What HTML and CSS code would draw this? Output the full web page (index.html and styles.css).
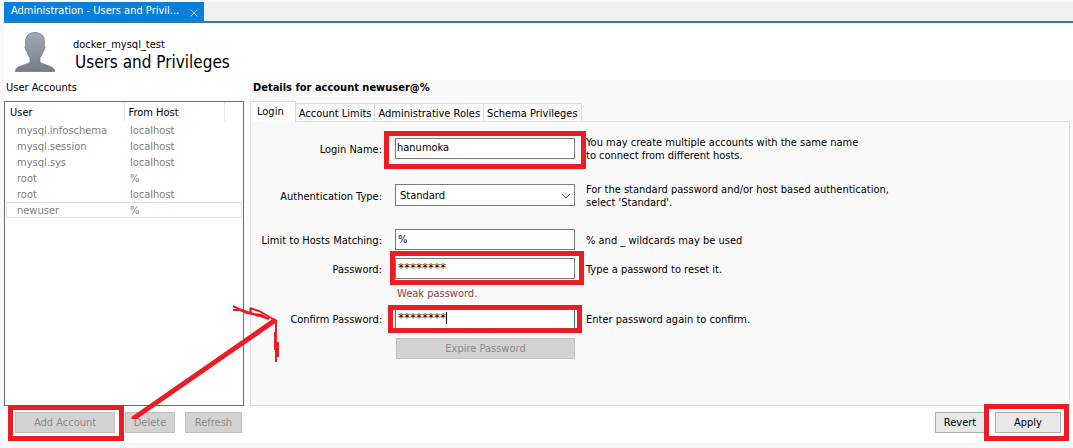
FILE: index.html
```html
<!DOCTYPE html>
<html lang="en">
<head>
<meta charset="utf-8">
<title>Users and Privileges</title>
<link rel="stylesheet" href="styles.css">
</head>
<body>
<div class="app">
  <nav class="doc-tabs">
    <div class="doc-tab">
      <span>Administration - Users and Privil...</span>
      <button class="close" aria-label="Close tab"><svg viewBox="0 0 8 8" width="8" height="8"><path d="M.5 .5 7.500 7.500M7.500 .5 .5 7.500"/></svg></button>
    </div>
  </nav>
  <header class="header">
    <svg class="avatar" viewBox="0 0 40 40" width="40" height="40" aria-hidden="true">
      <defs><linearGradient id="shade" x1="0" y1="0" x2="0" y2="1"><stop offset="0" stop-color="#a3a9b3"/><stop offset="1" stop-color="#747c89"/></linearGradient></defs>
      <path d="M20 .5C14 .5 10.500 4 10.500 10c0 1.500.1 2.500.2 3.500-.8.300-.7 2 0 4.200.4 1.300.8 1.800 1.400 2 .5 2.600 1.400 4.500 2.900 6v4.300c-1 2-11.500 4-13.500 6.300C.5 37.500.5 38.500.5 39.500h39c0-1 0-2-1-3.200-2-2.300-12.500-4.300-13.500-6.300v-4.300c1.500-1.500 2.400-3.400 2.900-6 .6-.2 1-.7 1.400-2 .7-2.200.8-3.900 0-4.200.1-1 .2-2 .2-3.500C29.500 4 26 .5 20 .5z" fill="url(#shade)" stroke="#737a85" stroke-width=".8"/>
    </svg>
    <div>
      <div class="connection">docker_mysql_test</div>
      <h1>Users and Privileges</h1>
    </div>
  </header>
  <main class="main">
    <section class="accounts">
      <h2 class="caption">User Accounts</h2>
      <div class="list">
        <table>
          <colgroup><col class="col-user"><col class="col-host"><col></colgroup>
          <thead><tr><th>User</th><th>From Host</th><th></th></tr></thead>
          <tbody>
            <tr><td>mysql.infoschema</td><td>localhost</td><td></td></tr>
            <tr><td>mysql.session</td><td>localhost</td><td></td></tr>
            <tr><td>mysql.sys</td><td>localhost</td><td></td></tr>
            <tr><td>root</td><td>%</td><td></td></tr>
            <tr><td>root</td><td>localhost</td><td></td></tr>
            <tr class="current"><td>newuser</td><td>%</td><td></td></tr>
          </tbody>
        </table>
      </div>
    </section>
    <section class="details">
      <h2 class="caption strong">Details for account newuser@%</h2>
      <div class="tabs" role="tablist">
        <button class="tab active" role="tab" aria-selected="true">Login</button>
        <button class="tab" role="tab">Account Limits</button>
        <button class="tab" role="tab">Administrative Roles</button>
        <button class="tab" role="tab">Schema Privileges</button>
      </div>
      <form class="panel">
        <label class="tall" for="login">Login Name:</label>
        <div class="field tall"><input id="login" type="text" value="hanumoka"><span class="mark mark-login"></span></div>
        <p class="tall">You may create multiple accounts with the same name<br>to connect from different hosts.</p>

        <label class="tall" for="auth">Authentication Type:</label>
        <div class="field tall"><select id="auth"><option>Standard</option></select><svg class="chevron" viewBox="0 0 10 6" width="10" height="6"><path d="M1 1l4 4 4-4"/></svg></div>
        <p class="tall">For the standard password and/or host based authentication,<br>select 'Standard'.</p>

        <label for="hosts">Limit to Hosts Matching:</label>
        <div class="field"><input id="hosts" type="text" value="%"></div>
        <p>% and _ wildcards may be used</p>

        <label for="password">Password:</label>
        <div class="field"><input id="password" class="secret" type="text" value="********"><span class="mark mark-password"></span></div>
        <p>Type a password to reset it.</p>

        <output class="warning" for="password">Weak password.</output>

        <label for="confirm">Confirm Password:</label>
        <div class="field"><input id="confirm" class="secret focused" type="text" value="********"><span class="caret"></span><span class="mark mark-confirm"></span></div>
        <p>Enter password again to confirm.</p>

        <button class="button expire" type="button" disabled>Expire Password</button>
      </form>
    </section>
  </main>
  <footer class="actions">
    <div class="marked"><button class="button add" disabled>Add Account</button><span class="mark mark-add"></span></div>
    <button class="button delete" disabled>Delete</button>
    <button class="button refresh" disabled>Refresh</button>
    <span class="spacer"></span>
    <button class="button">Revert</button>
    <div class="marked"><button class="button apply">Apply</button><span class="mark mark-apply"></span></div>
  </footer>
  <svg class="arrow" viewBox="0 0 160 120" width="160" height="120" aria-hidden="true">
    <path class="shaft" d="M7 119 147 22"/>
    <path class="barbs" d="M106 7l6 3 6 2 8 3 8 1 8 4M106 11h7l7 3 10 2 12 4M123 9l9 3 9 5 6 4M123 9l1 5 7 3"/>
    <path class="barbs" d="M149 21v42M148 33v18M151 43v15M148 52h3"/>
  </svg>
</div>
</body>
</html>
```
FILE: styles.css
```css
* { box-sizing: border-box; }
body {
  margin: 0;
  padding: 2px 0 5px 4px;
  background: #f8f8fb;
  color: #000;
  font: 11px/13px "DejaVu Sans Condensed", Tahoma, sans-serif;
}
button, input, select { font: inherit; color: inherit; margin: 0; border-radius: 0; }
h1, h2, p { margin: 0; font-weight: 400; }
.app { position: relative; background: #fff; }
.doc-tabs { display: flex; background: #f0f0f0; border-bottom: 2px solid #2f78b3; }
.doc-tab {
  display: flex; align-items: center; justify-content: space-between;
  width: 200px; height: 19px; padding: 0 6px 2px 7px;
  background: #0a7fd9; color: #fff; white-space: nowrap;
}
.close { display: flex; padding: 4px 0 0; border: 0; background: none; }
.close svg { fill: none; stroke: #9bd0f5; }
.header { display: flex; gap: 18px; height: 57px; padding: 9px 11px; }
.connection { padding-top: 6px; }
h1 { padding-left: 2px; font-size: 17px; line-height: 22px; }
.main { display: flex; min-height: 326px; gap: 6px; }
.accounts { display: flex; flex-direction: column; flex: 0 0 240px; }
.caption { padding-left: 2px; font-size: 11px; line-height: 15px; height: 21px; }
.strong { padding-left: 3px; font-weight: 700; }
.list { flex: 1; border: 1px solid #6d6d6d; padding: 0 1px; }
table { width: 100%; border-collapse: collapse; table-layout: fixed; }
.col-user { width: 118px; }
.col-host { width: 100px; }
th { height: 20px; padding: 0 0 0 4px; text-align: left; font-weight: 400; line-height: 13px; border-right: 1px solid #e6e6e6; }
th:last-child { border-right: 0; }
td { height: 16px; padding: 1px 0 0 6px; line-height: 14px; color: #7d7d7d; }
td:first-child { padding-left: 11px; }
.current { outline: 1px solid #e2e2e2; outline-offset: -1px; }
.details { display: flex; flex-direction: column; flex: 1; min-width: 0; padding-right: 3px; background: #f9f9f9; }
.tabs { display: flex; align-items: flex-end; height: 20px; }
.tab { height: 18px; padding: 1px 3px 0; border: 1px solid #dedede; border-width: 1px 1px 0 0; background: #f9f9f9; white-space: nowrap; }
.tab.active { height: 21px; padding: 0 11px 2px 6px; margin-bottom: -1px; border-left-width: 1px; background: #fff; z-index: 1; }
.panel {
  display: grid; flex: 1; align-content: start; align-items: center;
  grid-template-columns: 130px 180px 1fr; column-gap: 11px; row-gap: 8px;
  padding: 13px 4px 0 3px; border: 1px solid #dedede;
}
label { grid-column: 1; padding: 2px 2px 0 0; text-align: right; white-space: nowrap; }
.panel p { grid-column: 3; padding-top: 2px; }
.field.tall { padding-bottom: 13px; }
label.tall, .panel p.tall { padding-top: 1px; padding-bottom: 12px; }
.field { position: relative; grid-column: 2; }
input, select { display: block; width: 100%; height: 21px; padding: 0 2px; border: 1px solid #7a7a7a; background: #fff; outline: 0; }
select { height: 22px; padding-left: 4px; appearance: none; }
#login { padding-left: 1px; padding-bottom: 2px; }
.secret { padding-bottom: 2px; font-family: "DejaVu Sans", Verdana, sans-serif; font-size: 12px; }
.focused { border-color: #2b78ac; }
.chevron { position: absolute; right: 4px; top: 9px; fill: none; stroke: #555; }
.caret { position: absolute; left: 51px; top: 4px; width: 1px; height: 12px; background: #000; }
.warning { grid-column: 2; padding-left: 2px; color: #8d3f46; line-height: 13px; }
.button { height: 21px; padding: 0 7px; border: 1px solid #adadad; background: #e8e8e8; white-space: nowrap; }
.button:disabled { border-color: #bfbfbf; background: #d2d2d2; color: #8a8a8a; }
.expire { grid-column: 2; margin: 1px 0 0 1px; }
.actions { display: flex; gap: 10px; padding: 6px 12px 10px 11px; }
.actions .button { min-width: 50px; }
.actions .add { width: 100px; }
.actions .delete { width: 50px; }
.actions .refresh { width: 57px; }
.actions .apply { width: 66px; }
.marked { position: relative; }
.spacer { flex: 1; }
.mark { position: absolute; z-index: 2; border: 5px solid #ed1c24; pointer-events: none; }
.mark-login { inset: -7px -11px 3px -11px; }
.mark-password { inset: -7px -9px -6px -5px; }
.mark-confirm { inset: -3px -7px -4px -7px; }
.mark-add { inset: -7px -9px -8px -7px; }
.mark-apply { inset: -8px -8px -8px -11px; }
.arrow { position: absolute; left: 123px; top: 297px; z-index: 3; fill: none; stroke: #ed1c24; pointer-events: none; }
.shaft { stroke-width: 5; stroke-linecap: round; }
.barbs { stroke-width: 2; }
```
